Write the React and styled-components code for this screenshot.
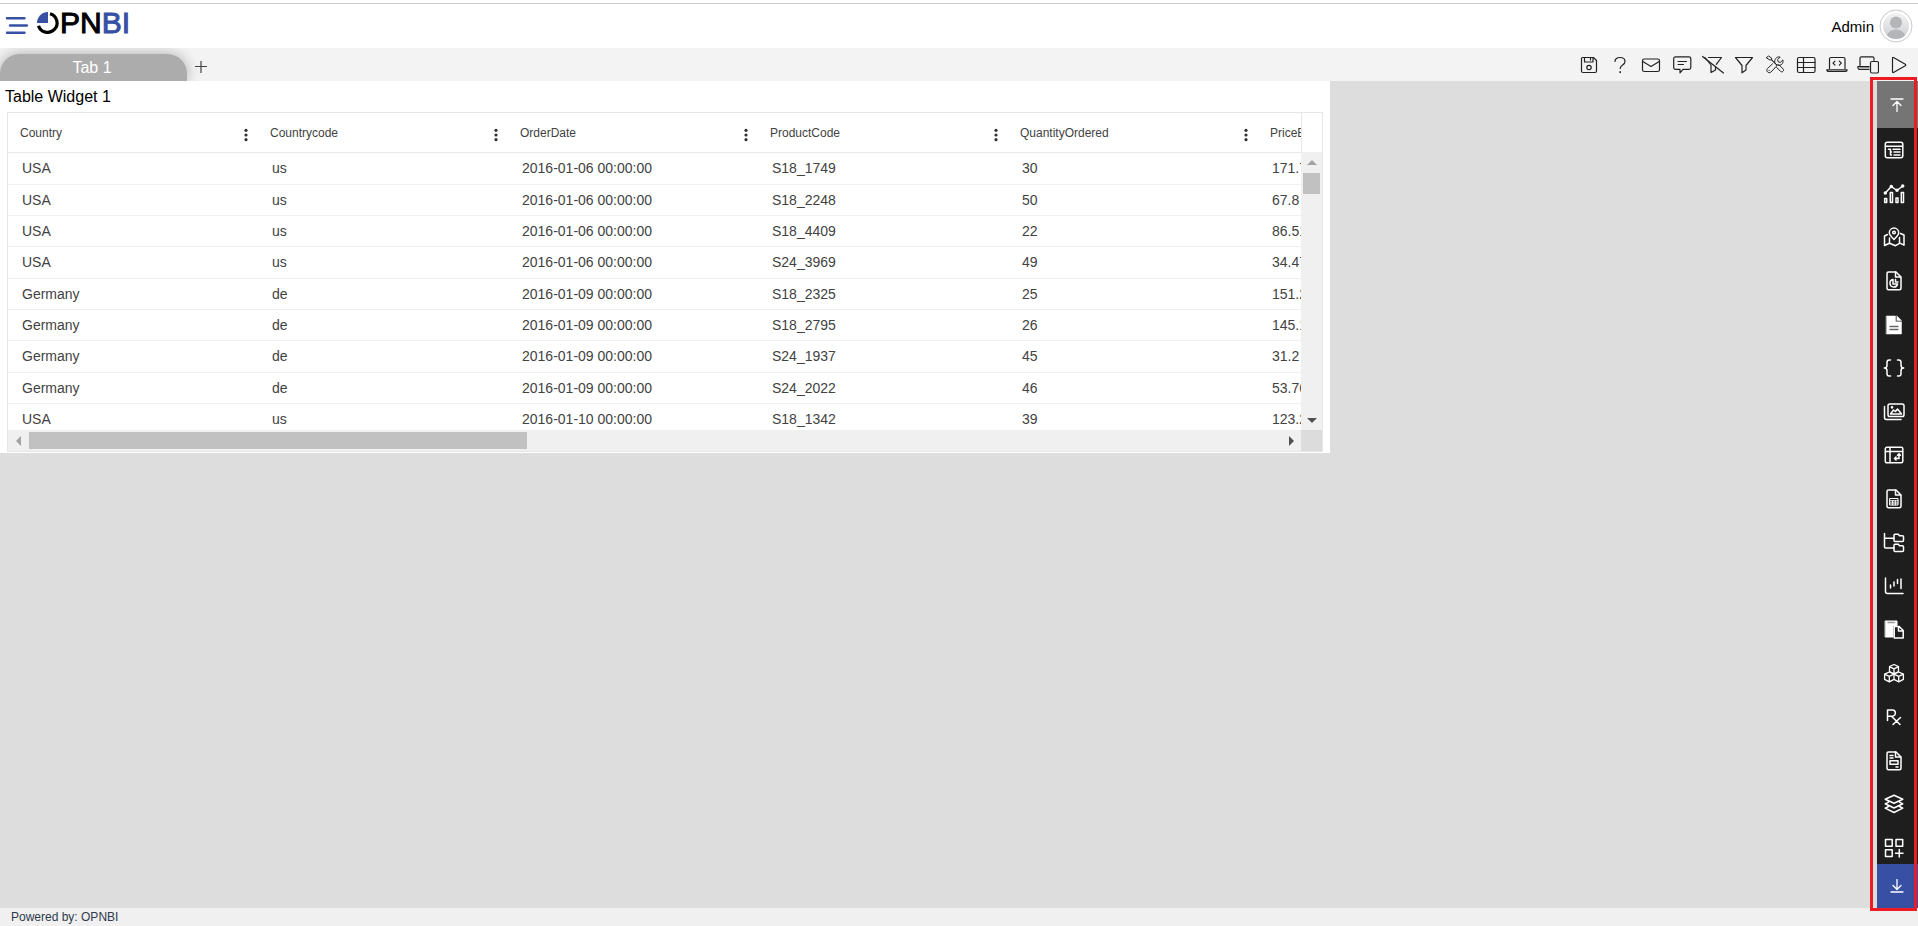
import React from "react";
import styled, { createGlobalStyle } from "styled-components";

const GlobalStyle = createGlobalStyle`
  * {
    box-sizing: border-box;
  }
  body {
    margin: 0;
    font-family: "Liberation Sans", Arial, sans-serif;
    background: #fff;
    color: #000;
  }
  button {
    padding: 0;
    border: 0;
    background: none;
    font: inherit;
    color: inherit;
    cursor: pointer;
  }
  svg {
    display: block;
  }
`;

const Page = styled.div`
  min-height: 100vh;
  display: flex;
  flex-direction: column;
  overflow: hidden;
`;

const Header = styled.header`
  height: 45px;
  margin-top: 3px;
  padding: 0 5px 0 4px;
  border-top: 1px solid #ccc;
  display: flex;
  justify-content: space-between;
`;

const Brand = styled.div`
  display: flex;
  align-items: flex-start;
  gap: 8px;
`;

const MenuButton = styled.button`
  padding-top: 12px;
`;

const Logo = styled.a`
  display: flex;
  align-items: flex-start;
  padding-top: 6px;
  text-decoration: none;
`;

const LogoText = styled.span`
  color: ${(props) => (props.$blue ? "#3750a4" : "#000")};
  font-size: 30px;
  line-height: 26px;
  -webkit-text-stroke: 1px currentColor;
`;

const User = styled.div`
  display: flex;
  align-items: center;
  gap: 5px;
  font-size: 15px;
`;

const Toolbar = styled.div`
  height: 33px;
  background: #f3f3f3;
  display: flex;
  justify-content: space-between;
  align-items: flex-end;
  overflow: hidden;
`;

const Tabs = styled.div`
  display: flex;
  align-items: center;
  gap: 8px;
`;

const Tab = styled.button`
  width: 187px;
  height: 27px;
  padding-right: 3px;
  border-radius: 20px 20px 0 0;
  background: #acacac;
  box-shadow: 0 0 14px rgba(0, 0, 0, 0.3);
  color: #fff;
  font-size: 16px;
`;

const Tools = styled.div`
  height: 33px;
  padding-right: 8px;
  display: flex;
  align-items: center;
  gap: 9px;
  color: #222;
`;

const Body = styled.main`
  flex: 1;
  display: flex;
  justify-content: space-between;
  align-items: stretch;
  background: #ddd;
`;

const Widget = styled.section`
  width: 69.35%;
  align-self: flex-start;
  padding: 0 7px 1px;
  background: #fff;
`;

const WidgetTitle = styled.h1`
  margin: 0;
  font-size: 16px;
  font-weight: 400;
  line-height: 31px;
  text-indent: -2px;
`;

const Grid = styled.div`
  border: 1px solid #e6e6e6;
  display: grid;
  grid-template-columns: minmax(0, 1fr) 21px;
  grid-template-rows: 317px 21px;
`;

const TableView = styled.div`
  overflow: hidden;
`;

const Table = styled.table`
  width: 1500px;
  table-layout: fixed;
  border-collapse: separate;
  border-spacing: 0;
  color: #424242;
`;

const Th = styled.th`
  height: 40px;
  padding: 0 9px 0 12px;
  border-bottom: 1px solid #e9e9e9;
  font-size: 12px;
  font-weight: 400;
  text-align: left;
`;

const ThContent = styled.div`
  display: flex;
  justify-content: space-between;
  align-items: center;
`;

const Kebab = styled.button`
  padding-top: 4px;
  color: #333;
`;

const Row = styled.tr`
  height: 31px;
  &:nth-child(3n + 1) {
    height: 32px;
  }
`;

const Td = styled.td`
  padding: 0 14px 1px;
  border-bottom: 1px solid #f0f0f0;
  font-size: 14px;
`;

const SideScroll = styled.div`
  display: flex;
  flex-direction: column;
`;

const HeaderGap = styled.div`
  height: 39px;
  border-left: 1px solid #e6e6e6;
`;

const ScrollBar = styled.div`
  flex: 1;
  display: flex;
  flex-direction: ${(props) => (props.$vertical ? "column" : "row")};
  align-items: center;
  background: #f0f0f0;
`;

const ScrollButton = styled.button`
  width: 21px;
  height: 21px;
  display: flex;
  align-items: center;
  justify-content: center;
  color: ${(props) => (props.$dim ? "#a3a3a3" : "#505050")};
`;

const Track = styled.div`
  flex: 1;
`;

const Thumb = styled.div`
  width: ${(props) => (props.$vertical ? "17px" : "39.8%")};
  height: ${(props) => (props.$vertical ? "21px" : "17px")};
  background: #c1c1c1;
`;

const Corner = styled.div`
  background: #dcdcdc;
`;

const Sidebar = styled.nav`
  position: relative;
  width: 41px;
  display: flex;
  flex-direction: column;
  background: #1e1e1e;
  color: #fff;
  &::after {
    content: "";
    position: absolute;
    z-index: 1;
    inset: -4px 1px -3px -7px;
    border: 3px solid #ed1c24;
    pointer-events: none;
  }
`;

const SideEnd = styled.button`
  height: ${(props) => (props.$blue ? "44px" : "47px")};
  padding-right: 2px;
  background: ${(props) => (props.$blue ? "#3750a4" : "#757575")};
  display: flex;
  align-items: center;
  justify-content: center;
`;

const SideItems = styled.div`
  flex: 1;
  padding: 11px 7px 5px 0;
  display: flex;
  flex-direction: column;
  align-items: center;
  justify-content: space-between;
`;

const Footer = styled.footer`
  height: 18px;
  padding-left: 11px;
  background: #f0f0f0;
  color: #2f3a4c;
  font-size: 12px;
  line-height: 18px;
`;

const Icon = ({ children, size = 22, stroke = 1.2 }) => (
  <svg
    width={size}
    height={size}
    viewBox={`0 0 ${size} ${size}`}
    fill="none"
    stroke="currentColor"
    strokeWidth={stroke}
    strokeLinecap="round"
    strokeLinejoin="round"
    aria-hidden="true"
  >
    {children}
  </svg>
);

const tools = [
  {
    name: "Save",
    icon: (
      <>
        <path d="M4.500 3.500h11l3 3v10.500a1.500 1.500 0 0 1-1.500 1.500H5a1.500 1.500 0 0 1-1.500-1.500V4.500a1 1 0 0 1 1-1z" />
        <path d="M6.500 3.500v4.500h8.500V3.500M12.500 4v2" />
        <circle cx="11" cy="13.500" r="2.200" />
      </>
    ),
  },
  {
    name: "Help",
    icon: (
      <>
        <path d="M6 7.500C6 4.800 8.200 3.500 11 3.500s5 1.400 5 4c0 3.700-4.800 3.200-4.800 7" />
        <path d="M11.200 17.800v.6" strokeWidth="1.600" />
      </>
    ),
  },
  {
    name: "Mail",
    icon: (
      <>
        <rect x="2.500" y="5" width="17" height="12.500" rx="1.800" />
        <path d="M2.800 7.500 11 12.500l8.200-5" />
      </>
    ),
  },
  {
    name: "Comments",
    icon: (
      <>
        <path d="M4.500 2.800h13.500a1.800 1.800 0 0 1 1.800 1.800v9a1.800 1.800 0 0 1-1.800 1.800h-6L9 18.800v-3.400H4.500a1.800 1.800 0 0 1-1.800-1.800v-9a1.800 1.800 0 0 1 1.800-1.800z" />
        <path d="M7 7.500h8.500M7 10.500h5.500" />
      </>
    ),
  },
  {
    name: "Clear filter",
    icon: (
      <>
        <path d="M6.500 3.500h13l-5.200 6.800M3 3.500l6 7.500v7.500l4.500-2.500v-3" />
        <path d="m0.500 2.500 21 16.500" />
      </>
    ),
  },
  {
    name: "Filter",
    icon: <path d="M2.500 3.500h17L13 11.500v4.500l-4 2.800v-7.300z" />,
  },
  {
    name: "Settings",
    icon: (
      <g strokeWidth="1">
        <path d="m2.500 3.500 2-1.500 3 2 .3 2 5 5c1-.6 2-.4 2.800.3l3.600 3.700c1.400 1.500-1 3.800-2.500 2.500L13 13.800c-.8-.8-.9-1.800-.3-2.800l-5-5-2-.3z" />
        <path d="M10.800 9c-.9-3.500 1.600-6.800 5.400-5.900L13.600 5.700l.6 2.100 2.100.6 2.600-2.500c.8 3.600-1.700 5.900-4.900 5.500M8.500 9.800l-5 4.700c-2.200 2.300 1.200 5.700 3.500 3.500l4.600-4.800M5 16.500h.2" />
      </g>
    ),
  },
  {
    name: "Table",
    icon: (
      <>
        <rect x="2.500" y="3.500" width="17.500" height="15" rx="1.500" />
        <path d="M2.500 8.500H20M2.500 13.500H20M8.500 3.500v15" />
      </>
    ),
  },
  {
    name: "Code",
    icon: (
      <>
        <path d="M3.500 14.500V5A1.500 1.500 0 0 1 5 3.500h12.500A1.500 1.500 0 0 1 19 5v9.500M.8 15.800h20.400c0 1-.8 1.700-1.800 1.700H2.600c-1 0-1.800-.7-1.800-1.700zM9 7.200 7 9.200l2 2M13.300 7.200l2 2-2 2" />
      </>
    ),
  },
  {
    name: "Devices",
    icon: (
      <>
        <path d="M3 12.500V4.300A1.500 1.500 0 0 1 4.500 2.800h11A1.500 1.500 0 0 1 17 4.300v2M12 12.500H.8c0 2 .8 2.800 1.800 2.800H12M3 13h9" />
        <rect x="13.500" y="7.500" width="8" height="11.500" rx="1.500" />
      </>
    ),
  },
  {
    name: "Run",
    icon: <path d="M4.500 4.200v13.600c0 .7.500.9 1 .6l11.800-6.700c.6-.4.600-1 0-1.400L5.500 3.600c-.5-.3-1-.1-1 .6z" />,
  },
];

const filePath =
  "M5.500 2h7.500l5 5v11.200a1.500 1.500 0 0 1-1.500 1.500h-11A1.500 1.500 0 0 1 4 18.200V3.500A1.500 1.500 0 0 1 5.500 2z";

const sideItems = [
  {
    name: "Table widget",
    icon: (
      <>
        <rect x="2.300" y="3.300" width="17.500" height="15.500" rx="2" />
        <path d="M2.500 7.300h17M5.500 10.300h2M10 10.300h7M7.500 13h1M11 13h6M7.500 10.500V16h1M11 16h6" />
      </>
    ),
  },
  {
    name: "Chart",
    icon: (
      <>
        <path d="m2.300 10 6-6.500 5.700 4 5.700-4.500" />
        <circle cx="2.300" cy="10" r="1" fill="currentColor" />
        <circle cx="8.300" cy="3.500" r="1" fill="currentColor" />
        <circle cx="14" cy="7.300" r="1" fill="currentColor" />
        <circle cx="19.700" cy="3" r="1" fill="currentColor" />
        <path d="M1.700 15.500h2v4h-2zM7.300 9.500h2.200v10H7.300zM13 15h2v4.500h-2zM18.300 9.500h2.200v10h-2.200z" />
      </>
    ),
  },
  {
    name: "Map",
    icon: (
      <>
        <path d="M11 13.500C8 10.500 6.300 9 6.300 6.800a4.700 4.700 0 0 1 9.400 0c0 2.200-1.700 3.700-4.700 6.700z" />
        <circle cx="11" cy="6.500" r="1.300" />
        <path d="M4.500 8.500 1.500 10v9.500l5-2.300 6 2.500 4.500-2.500 4 2V9l-3.500-1.500M6.500 12v5M16.500 11.500v5.500" />
      </>
    ),
  },
  {
    name: "Report",
    icon: (
      <>
        <path d={filePath} />
        <path d="M12.500 2v5h5M10 9.500a3.800 3.800 0 1 0 4.500 4.500h-4.500zM12.500 9.500V12h2.500" />
      </>
    ),
  },
  {
    name: "Document",
    icon: (
      <>
        <path d="M3.500 2h9v5.800h6V20h-15z" fill="currentColor" strokeWidth="0.500" />
        <path d="m14 2 4.500 4.500H14z" fill="currentColor" strokeWidth="0.500" />
        <path d="M7 12.500h8M7 15.500h8" stroke="#67686d" strokeWidth="1.300" />
      </>
    ),
  },
  {
    name: "Code",
    icon: (
      <path d="M7.500 3H6.200C4.700 3 4 4 4 5.300v3C4 10 3 11 1.300 11c1.700 0 2.700 1 2.700 2.700v3C4 18 4.700 19 6.200 19h1.300M14.500 3h1.300C17.300 3 18 4 18 5.300v3c0 1.700 1 2.700 2.700 2.700-1.700 0-2.700 1-2.700 2.700v3c0 1.300-.7 2.300-2.200 2.300h-1.300" />
    ),
  },
  {
    name: "Images",
    icon: (
      <>
        <rect x="5" y="3" width="16" height="12.500" rx="1.800" />
        <path d="M1.500 5.500v11a2 2 0 0 0 2 2h14.500M7.500 13l3-4 2 1.500L14.500 8l4 5z" />
        <circle cx="9" cy="6.300" r=".6" />
      </>
    ),
  },
  {
    name: "Pivot",
    icon: (
      <>
        <rect x="2.300" y="3.300" width="17.500" height="15.500" rx="1.500" />
        <path d="M2.500 7.500h17M7 3.500v15M16 10v4.500h-4M14.500 11.200 16 9.800l1.500 1.400M13 13l-1.500 1.500L13 16" />
      </>
    ),
  },
  {
    name: "Spreadsheet",
    icon: (
      <>
        <path d={filePath} />
        <path d="M12.500 2v5h5" />
        <path d="M7 10.500h8v6.500H7zM7 12.800h8M7 15h8M9.700 12.500v4.500M12.300 12.500v4.500" strokeWidth="1" />
      </>
    ),
  },
  {
    name: "Folder tree",
    icon: (
      <>
        <path d="M1.500 1.500v13.500a1 1 0 0 0 1 1h8.500M1.500 6.300h9.500" />
        <path d="M12.500 2.300h2.800l1.200 1.400h3a1 1 0 0 1 1 1v3.800a1 1 0 0 1-1 1h-7.500a1 1 0 0 1-1-1V3.300a1 1 0 0 1 1-1zM12.500 12.300h2.800l1.200 1.400h3a1 1 0 0 1 1 1v3.800a1 1 0 0 1-1 1h-7.500a1 1 0 0 1-1-1v-5.200a1 1 0 0 1 1-1z" />
      </>
    ),
  },
  {
    name: "Candle chart",
    icon: (
      <path d="M2.500 3v13.500a2 2 0 0 0 2 2H20M7.500 10v3M11 7v4M14.500 4.500v4M18 4v9.500" />
    ),
  },
  {
    name: "Paste",
    icon: (
      <>
        <path d="M2.500 2h11.500v4.500H10V18H2.500z" fill="currentColor" strokeWidth="1" />
        <path d="M5 3.500h6.500" stroke="#9a9a9a" />
        <path d="M11.200 7.500h5l4 4V19h-9zM15.500 8v4H20" />
      </>
    ),
  },
  {
    name: "Blocks",
    icon: (
      <path
        strokeWidth="1.300"
        d="m11 1.500 4.500 2v5L11 10.800 6.500 8.500v-5zM6.500 3.700 11 5.800l4.500-2.100M11 5.800v5M6.300 9l4.700 2.100v5.300l-4.700 2.400-4.700-2.400v-5.300zM1.600 11.200l4.700 2.200 4.700-2.200M6.300 13.400v5.400M15.700 9l4.700 2.100v5.300l-4.700 2.400-4.700-2.400v-5.300zM11 11.200l4.700 2.200 4.700-2.200M15.700 13.400v5.400"
      />
    ),
  },
  {
    name: "Prescription",
    icon: (
      <path d="M4.500 14.500V4h4.800a3 3 0 0 1 0 6.200H4.500M8.500 10.300l8.500 8.200M17.500 11.500 10 18.500" />
    ),
  },
  {
    name: "Form",
    icon: (
      <>
        <path d={filePath} />
        <path d="M12.500 2v5h5M7 5.500h3M7 8h3M7 10.800h8v3.500H7zM13 17h2" />
      </>
    ),
  },
  {
    name: "Layers",
    icon: (
      <path d="m11 2.300 8.800 4-8.800 4-8.800-4zM5.500 9.200l-3.300 1.600 8.800 4.200 8.800-4.200-3.300-1.600M5.500 13.500l-3.300 1.700L11 19.500l8.800-4.300-3.300-1.700" />
    ),
  },
  {
    name: "Add widget",
    icon: (
      <path d="M2.500 2.500h6.700v6.700H2.500zM13 2.500h6.700v6.700H13zM2.500 12.800h6.700v6.700H2.500zM16.300 12.500v7.500M12.500 16.300H20" />
    ),
  },
];

const columns = [
  "Country",
  "Countrycode",
  "OrderDate",
  "ProductCode",
  "QuantityOrdered",
  "PriceEach",
];

const rows = [
  ["USA", "us", "2016-01-06 00:00:00", "S18_1749", "30", "171.7"],
  ["USA", "us", "2016-01-06 00:00:00", "S18_2248", "50", "67.8"],
  ["USA", "us", "2016-01-06 00:00:00", "S18_4409", "22", "86.51"],
  ["USA", "us", "2016-01-06 00:00:00", "S24_3969", "49", "34.47"],
  ["Germany", "de", "2016-01-09 00:00:00", "S18_2325", "25", "151.28"],
  ["Germany", "de", "2016-01-09 00:00:00", "S18_2795", "26", "145.13"],
  ["Germany", "de", "2016-01-09 00:00:00", "S24_1937", "45", "31.2"],
  ["Germany", "de", "2016-01-09 00:00:00", "S24_2022", "46", "53.76"],
  ["USA", "us", "2016-01-10 00:00:00", "S18_1342", "39", "123.29"],
];

const arrows = {
  up: "M0 7 5 2l5 5z",
  down: "M0 3l5 5 5-5z",
  left: "M7 0 2 5l5 5z",
  right: "M3 0l5 5-5 5z",
};

const Arrow = ({ dir, dim }) => (
  <ScrollButton type="button" aria-label={`Scroll ${dir}`} $dim={dim}>
    <svg width="10" height="10" viewBox="0 0 10 10" fill="currentColor">
      <path d={arrows[dir]} />
    </svg>
  </ScrollButton>
);

const TableWidget = () => (
  <Widget>
    <WidgetTitle>Table Widget 1</WidgetTitle>
    <Grid>
      <TableView>
        <Table>
          <thead>
            <tr>
              {columns.map((column) => (
                <Th key={column} scope="col">
                  <ThContent>
                    {column}
                    <Kebab type="button" aria-label={`${column} menu`}>
                      <svg width="6" height="14" viewBox="0 0 6 14" fill="currentColor">
                        <circle cx="3" cy="2.300" r="1.600" />
                        <circle cx="3" cy="7" r="1.600" />
                        <circle cx="3" cy="11.700" r="1.600" />
                      </svg>
                    </Kebab>
                  </ThContent>
                </Th>
              ))}
            </tr>
          </thead>
          <tbody>
            {rows.map((row, i) => (
              <Row key={i}>
                {row.map((value, j) => (
                  <Td key={j}>{value}</Td>
                ))}
              </Row>
            ))}
          </tbody>
        </Table>
      </TableView>
      <SideScroll>
        <HeaderGap />
        <ScrollBar $vertical>
          <Arrow dir="up" dim />
          <Thumb $vertical />
          <Track />
          <Arrow dir="down" />
        </ScrollBar>
      </SideScroll>
      <ScrollBar>
        <Arrow dir="left" dim />
        <Track>
          <Thumb />
        </Track>
        <Arrow dir="right" />
      </ScrollBar>
      <Corner />
    </Grid>
  </Widget>
);

const App = () => (
  <Page>
    <GlobalStyle />
    <Header>
      <Brand>
        <MenuButton type="button" aria-label="Menu">
          <svg width="24" height="20" viewBox="0 0 24 20" stroke="#3750a4" strokeWidth="2.400" strokeLinecap="round">
            <path d="M3 2.300h17.500M6 9.500h17M3 16.700h17.500" />
          </svg>
        </MenuButton>
        <Logo href="#" aria-label="OPNBI">
          <svg width="24" height="26" viewBox="0 0 24 26" fill="none">
            <path d="M12 2v11H1A11 11 0 0 1 12 2z" fill="#3750a4" />
            <path d="M14 3.700a9.500 9.500 0 1 1-11.500 12" stroke="#000" strokeWidth="3.200" />
          </svg>
          <LogoText>PN</LogoText>
          <LogoText $blue>BI</LogoText>
        </Logo>
      </Brand>
      <User>
        Admin
        <svg width="34" height="34" viewBox="0 0 34 34">
          <defs>
            <linearGradient id="avatar" x1="0" y1="0" x2="0" y2="1">
              <stop offset="0" stopColor="#f2f2f3" />
              <stop offset="1" stopColor="#cfd0d3" />
            </linearGradient>
            <clipPath id="face">
              <circle cx="17" cy="17" r="13" />
            </clipPath>
          </defs>
          <circle cx="17" cy="17" r="16" fill="#fff" stroke="#c9c9c9" />
          <circle cx="17" cy="17" r="13" fill="url(#avatar)" />
          <g clipPath="url(#face)" fill="#b3b5b9">
            <circle cx="17" cy="13.500" r="6" />
            <ellipse cx="17" cy="27.500" rx="9" ry="7" />
          </g>
        </svg>
      </User>
    </Header>
    <Toolbar>
      <Tabs>
        <Tab type="button">Tab 1</Tab>
        <button type="button" aria-label="Add tab">
          <svg width="13" height="13" viewBox="0 0 13 13" stroke="#444" strokeWidth="1.200">
            <path d="M0 5.500h12M6 0v12" />
          </svg>
        </button>
      </Tabs>
      <Tools>
        {tools.map((tool) => (
          <button type="button" key={tool.name} aria-label={tool.name}>
            <Icon>{tool.icon}</Icon>
          </button>
        ))}
      </Tools>
    </Toolbar>
    <Body>
      <TableWidget />
      <Sidebar>
        <SideEnd type="button" aria-label="Scroll to top">
          <Icon size={14} stroke={1.3}>
            <path d="M1 1h12M7 13.500V4M3 7.500 7 3.500l4 4" />
          </Icon>
        </SideEnd>
        <SideItems>
          {sideItems.map((item) => (
            <button type="button" key={item.name} aria-label={item.name}>
              <Icon stroke={1.5}>{item.icon}</Icon>
            </button>
          ))}
        </SideItems>
        <SideEnd type="button" $blue aria-label="Scroll to bottom">
          <Icon size={14} stroke={1.3}>
            <path d="M1 13h12M7 .5V10M3 6.500l4 4 4-4" />
          </Icon>
        </SideEnd>
      </Sidebar>
    </Body>
    <Footer>Powered by: OPNBI</Footer>
  </Page>
);

export default App;
